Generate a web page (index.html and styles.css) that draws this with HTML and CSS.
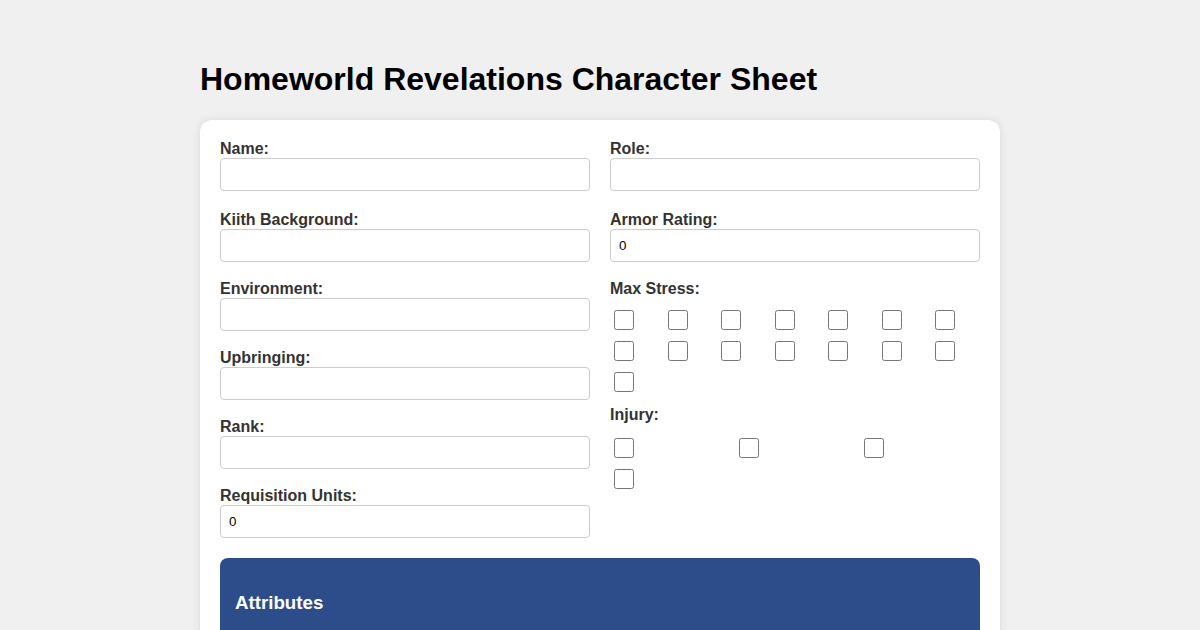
FILE: index.html
```html
<!DOCTYPE html>
<html lang="en">
<head>
<meta charset="utf-8">
<title>Homeworld Revelations Character Sheet</title>
<link rel="stylesheet" href="styles.css">
</head>
<body>
<div class="page">
  <h1 class="title">Homeworld Revelations Character Sheet</h1>
  <div class="card">
    <div class="columns">
      <div class="col">
        <div class="group">
          <label class="label" for="name">Name:</label>
          <input class="field" id="name" type="text">
        </div>
        <div class="group">
          <label class="label" for="kiith">Kiith Background:</label>
          <input class="field" id="kiith" type="text">
        </div>
        <div class="group">
          <label class="label" for="env">Environment:</label>
          <input class="field" id="env" type="text">
        </div>
        <div class="group">
          <label class="label" for="upb">Upbringing:</label>
          <input class="field" id="upb" type="text">
        </div>
        <div class="group">
          <label class="label" for="rank">Rank:</label>
          <input class="field" id="rank" type="text">
        </div>
        <div class="group">
          <label class="label" for="ru">Requisition Units:</label>
          <input class="field" id="ru" type="number" value="0">
        </div>
      </div>
      <div class="col">
        <div class="group">
          <label class="label" for="role">Role:</label>
          <input class="field" id="role" type="text">
        </div>
        <div class="group">
          <label class="label" for="armor">Armor Rating:</label>
          <input class="field" id="armor" type="number" value="0">
        </div>
        <div class="track">
          <label class="label">Max Stress:</label>
          <div class="boxes boxes-7">
            <input type="checkbox" class="box"><input type="checkbox" class="box"><input type="checkbox" class="box"><input type="checkbox" class="box"><input type="checkbox" class="box"><input type="checkbox" class="box"><input type="checkbox" class="box">
            <input type="checkbox" class="box"><input type="checkbox" class="box"><input type="checkbox" class="box"><input type="checkbox" class="box"><input type="checkbox" class="box"><input type="checkbox" class="box"><input type="checkbox" class="box">
            <input type="checkbox" class="box">
          </div>
        </div>
        <div class="track">
          <label class="label">Injury:</label>
          <div class="boxes boxes-3">
            <input type="checkbox" class="box"><input type="checkbox" class="box"><input type="checkbox" class="box"><input type="checkbox" class="box">
          </div>
        </div>
      </div>
    </div>
    <div class="section">
      <h3 class="section-title">Attributes</h3>
    </div>
  </div>
</div>
</body>
</html>
```
FILE: styles.css
```css
html, body {
  margin: 0;
  padding: 0;
}
body {
  background: #f0f0f0;
  font-family: "Liberation Sans", Arial, sans-serif;
  color: #000;
}
.page {
  width: 800px;
  margin: 0 auto;
  padding-top: 40px;
}
.title {
  font-size: 32px;
  font-weight: bold;
  margin: 21.44px 0;
  line-height: normal;
}
.card {
  background: #fff;
  border-radius: 12px;
  box-shadow: 0 0 10px rgba(0, 0, 0, 0.1);
  padding: 20px;
}
.columns {
  display: grid;
  grid-template-columns: 1fr 1fr;
  column-gap: 20px;
}
.group {
  margin-bottom: 18px;
}
.group:first-child {
  margin-bottom: 20px;
}
.label {
  display: block;
  font-weight: bold;
  font-size: 16px;
  color: #333;
  line-height: normal;
}
.field {
  display: block;
  width: 100%;
  box-sizing: border-box;
  padding: 8px;
  border: 1px solid #ccc;
  border-radius: 4px;
  font-family: "Liberation Sans", Arial, sans-serif;
  font-size: 13.333px;
  line-height: normal;
  height: 33px;
  color: #000;
  background: #fff;
}
.track {
  margin-bottom: 11px;
}
.boxes {
  display: grid;
  gap: 5px;
  margin-top: 9px;
}
.boxes-7 {
  grid-template-columns: repeat(7, 1fr);
}
.boxes-3 {
  grid-template-columns: repeat(3, 1fr);
  margin-top: 11px;
}
.box {
  width: 20px;
  height: 20px;
  margin: 3px 3px 3px 4px;
}
.section {
  margin-top: 2px;
  background: #2c4d8a;
  border-radius: 8px;
  padding: 15px;
  color: #fff;
  min-height: 120px;
}
.section-title {
  font-size: 18.72px;
  margin: 18.72px 0;
}
```
